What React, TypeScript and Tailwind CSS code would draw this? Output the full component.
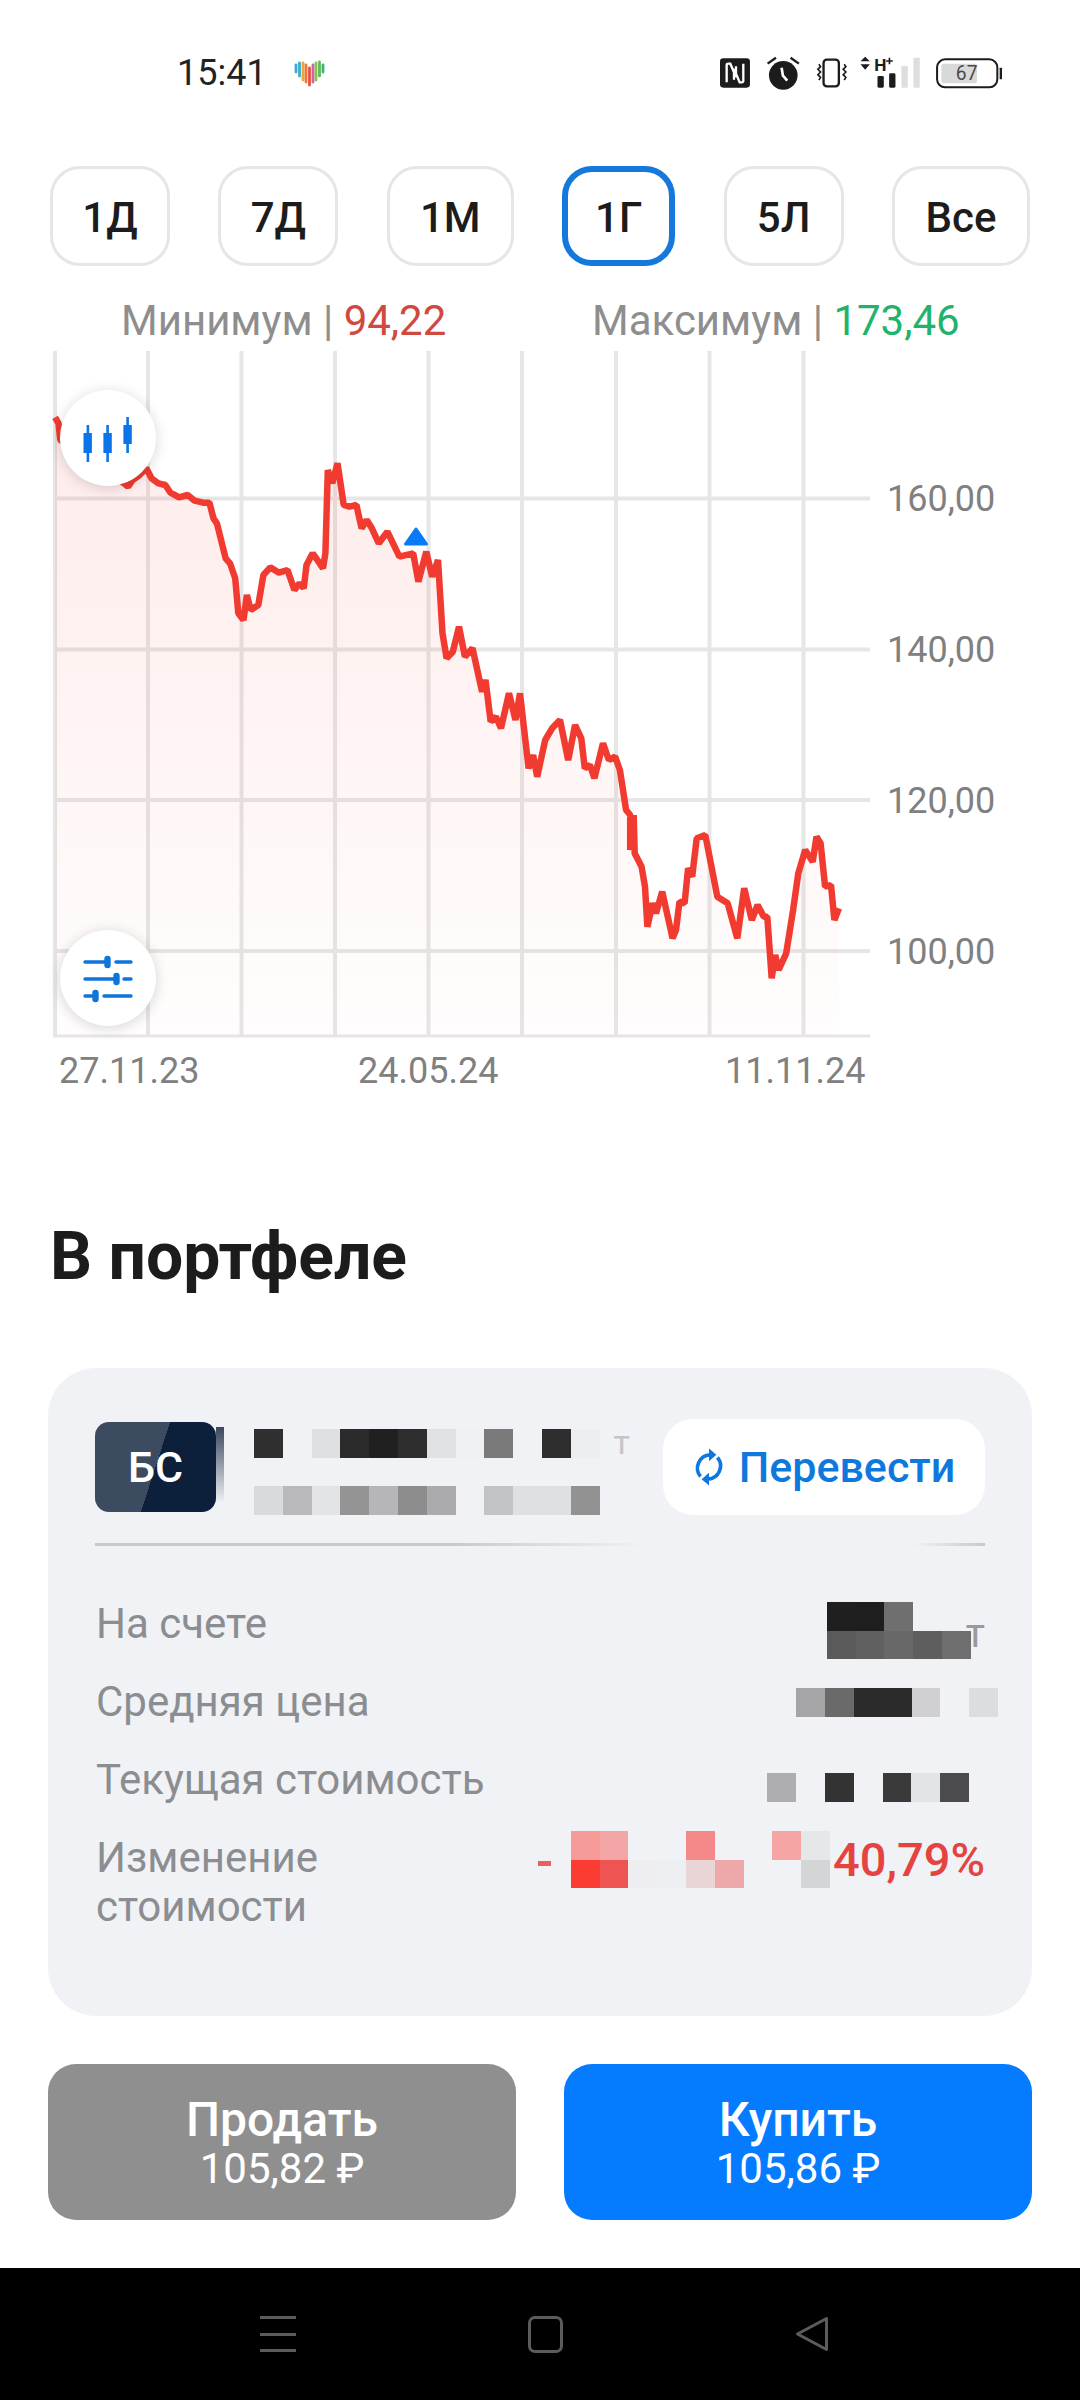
import React from "react";

const ranges = [
  { label: "1Д", width: "w-[120px]" },
  { label: "7Д", width: "w-[120px]" },
  { label: "1М", width: "w-[127px]" },
  { label: "1Г", width: "w-[113px]", active: true },
  { label: "5Л", width: "w-[120px]" },
  { label: "Все", width: "w-[138px]" },
];

// traced from the screenshot, left half then right half of the chart
const leftTrace = [
  [160, 232], [170, 250], [175, 300], [360, 430], [372, 440], [385, 420], [405, 405], [425, 385], [440, 415], [460, 430],
  [480, 435], [495, 458], [520, 472], [545, 465], [565, 482], [590, 488], [608, 488], [620, 535], [630, 550], [655, 655],
  [668, 670], [683, 715], [692, 820], [707, 840], [717, 765], [728, 810], [750, 795], [765, 705], [785, 682], [810, 698],
  [835, 690], [855, 750], [870, 730], [882, 745], [890, 675], [908, 640], [925, 665], [938, 685], [945, 640], [952, 390],
  [965, 430], [980, 370], [998, 495], [1015, 500], [1035, 495], [1050, 565], [1065, 540], [1080, 565], [1100, 610],
  [1125, 575], [1160, 650], [1200, 640], [1215, 725], [1238, 635], [1255, 710], [1272, 660], [1285, 880], [1297, 955],
  [1315, 935], [1333, 860], [1350, 950], [1372, 925], [1400, 1055], [1410, 1020], [1425, 1145], [1440, 1130], [1455, 1165],
  [1478, 1060], [1497, 1140], [1510, 1060], [1535, 1285], [1548, 1245], [1560, 1310],
];
const rightTrace = [
  [15, 0], [35, -35], [58, -60], [82, 60], [102, -45], [120, -5], [130, 85], [145, 75], [158, 115], [183, 10], [200, 60],
  [218, 50], [232, 90], [250, 210], [262, 225], [262, 330], [272, 225], [275, 340], [295, 380], [305, 440], [312, 560],
  [327, 490], [337, 520], [355, 455], [385, 595], [395, 570], [405, 485], [420, 490], [430, 385], [442, 410], [455, 295],
  [480, 285], [515, 470], [545, 490], [573, 595], [593, 445], [615, 540], [632, 495], [650, 530], [660, 530], [673, 715],
  [683, 645], [693, 690], [715, 640], [735, 510], [750, 400], [770, 330], [792, 365], [803, 290], [815, 310], [828, 440],
  [845, 435], [855, 540], [868, 505],
];
const pricePoints = [
  ...leftTrace.map(([x, y]) => [x / 2.904, 340 + y / 3]),
  ...rightTrace.map(([x, y]) => [540 + x / 2.904, 740 + y / 3]),
];
const priceLine = pricePoints.map(([x, y]) => `${x.toFixed(1)},${y.toFixed(1)}`).join(" ");
const lastX = pricePoints[pricePoints.length - 1][0].toFixed(1);

const gridX = [55, 148, 241.5, 335, 428.5, 522, 616, 709.5, 803.5];
const gridY = [498.5, 649.5, 800, 951];
const priceLabels = ["160,00", "140,00", "120,00", "100,00"];

function Mosaic({ rows }: { rows: string[][] }) {
  return (
    <div className="flex flex-col shrink-0">
      {rows.map((row, i) => (
        <div key={i} className="flex">
          {row.map((cell, j) => (
            <div key={j} className={`w-[28.8px] h-[28.5px] ${cell}`} />
          ))}
        </div>
      ))}
    </div>
  );
}

function StatusIcons() {
  return (
    <svg width="283" height="35" viewBox="60 45 850 105" className="shrink-0">
      <rect x="60" y="52" width="90" height="88" rx="10" fill="#1c1c1c" />
      <path d="M80 124V72q0-4 5-4h6l17 40V76M130 68v52q0 4-5 4h-6l-17-40v32" fill="none" stroke="#fff" strokeWidth="7" />
      <circle cx="250" cy="103" r="43" fill="#1c1c1c" />
      <path d="M203 68l25-18M272 50l25 18" stroke="#1c1c1c" strokeWidth="7" />
      <path d="M245 80l4 24 13 15" fill="none" stroke="#fff" strokeWidth="8" />
      <rect x="371" y="56" width="46" height="80" rx="10" fill="none" stroke="#1c1c1c" strokeWidth="7" />
      <path d="M357 70l5 7-8 8 8 8-8 8 8 8-5 8M433 70l5 7-8 8 8 8-8 8 8 8-5 8" fill="none" stroke="#1c1c1c" strokeWidth="5" />
      <path d="M496 47l14 14h-28zM496 86l14-16h-28z" fill="#1c1c1c" />
      <text x="523" y="90" fontFamily="Roboto, sans-serif" fontWeight="700" fontSize="52" fill="#1c1c1c">H</text>
      <path d="M569 50v20M559 60h20" stroke="#1c1c1c" strokeWidth="5" />
      <rect x="533" y="105" width="19" height="35" rx="4" fill="#1c1c1c" />
      <rect x="568" y="97" width="19" height="43" rx="4" fill="#1c1c1c" />
      <rect x="605" y="75" width="19" height="65" rx="2" fill="#dedede" />
      <rect x="641" y="50" width="19" height="90" rx="2" fill="#dedede" />
      <rect x="712" y="55" width="181" height="84" rx="24" fill="none" stroke="#1c1c1c" strokeWidth="6" />
      <rect x="725" y="68" width="107" height="59" rx="8" fill="#d9d9d9" />
      <rect x="900" y="80" width="7" height="35" rx="2" fill="#1c1c1c" />
      <text x="801" y="117" textAnchor="middle" fontFamily="Roboto, sans-serif" fontSize="58" fill="#4a4a4a">67</text>
    </svg>
  );
}

function HeartBadge() {
  const bars = [
    [3, 7, 14, "#39a7e0"],
    [6.5, 5, 18, "#35b0c8"],
    [10, 5, 22, "#f0a23c"],
    [13, 7, 24, "#ee7a3a"],
    [16.5, 10, 27, "#e8503f"],
    [20, 7, 24, "#c965a8"],
    [23, 5, 22, "#8bc34a"],
    [26.5, 4, 18, "#5cb85c"],
    [30, 7, 14, "#3bb37a"],
  ] as const;
  return (
    <svg width="33" height="30" viewBox="0 0 33 30" className="shrink-0">
      {bars.map(([x, y1, y2, color]) => (
        <line key={x} x1={x} y1={y1} x2={x} y2={y2} stroke={color} strokeWidth="2.8" strokeLinecap="round" />
      ))}
    </svg>
  );
}

function PriceChart() {
  return (
    <svg width="880" height="690" viewBox="0 351 880 690" className="shrink-0">
      <defs>
        <linearGradient id="priceFill" x1="0" y1="0" x2="0" y2="1">
          <stop offset="0" stopColor="#f23b30" stopOpacity="0.1" />
          <stop offset="1" stopColor="#f23b30" stopOpacity="0.01" />
        </linearGradient>
      </defs>
      {gridX.map((x) => (
        <line key={x} x1={x} y1="351" x2={x} y2="1037" stroke="#e6e6e6" strokeWidth="4" />
      ))}
      {gridY.map((y) => (
        <line key={y} x1="55" y1={y} x2="870" y2={y} stroke="#e6e6e6" strokeWidth="4" />
      ))}
      <line x1="53" y1="1036" x2="870" y2="1036" stroke="#e6e6e6" strokeWidth="3" />
      <polygon points={`${priceLine} ${lastX},1035 55,1035`} fill="url(#priceFill)" />
      <polyline points={priceLine} fill="none" stroke="#f23b30" strokeWidth="6.5" strokeLinejoin="bevel" />
      <path d="M405.5 544l10.5-15 10.5 15z" fill="#0a7bf5" stroke="#0a7bf5" strokeWidth="3" strokeLinejoin="round" />
    </svg>
  );
}

function RoundButton({ className, children }: { className: string; children: React.ReactNode }) {
  return (
    <div className={`absolute left-[60px] w-[96px] h-[96px] rounded-full bg-white shadow-[0_2px_14px_rgba(0,0,0,0.16)] ${className}`}>
      <svg width="96" height="96" viewBox="0 0 96 96">
        {children}
      </svg>
    </div>
  );
}

function DetailRow({ label, children }: { label: React.ReactNode; children: React.ReactNode }) {
  return (
    <div className="flex h-[78px] items-start">
      <div className="pl-[1px] text-[42px] leading-[49px] text-[#8b8d91]">{label}</div>
      <div className="ml-auto flex items-start">{children}</div>
    </div>
  );
}

export default function App() {
  return (
    <div className="flex flex-col w-[1080px] h-[2400px] bg-white font-['Roboto',sans-serif] overflow-hidden">
      <div className="flex items-center h-[146px] pl-[177px] pr-[77px]">
        <span className="text-[36px] text-[#222222]">15:41</span>
        <div className="ml-[26px]">
          <HeartBadge />
        </div>
        <div className="ml-auto">
          <StatusIcons />
        </div>
      </div>

      <div className="flex justify-between h-[100px] mt-[20px] pl-[50px] pr-[50px]">
        {ranges.map((r) => (
          <div
            key={r.label}
            className={`flex items-center justify-center ${r.width} h-full pt-[2px] rounded-[30px] bg-white text-[42px] font-medium text-[#1c1c1c] ${
              r.active ? "border-[6px] border-[#1478dc]" : "border-[3px] border-[#e6e6e6]"
            }`}
          >
            {r.label}
          </div>
        ))}
      </div>

      <div className="flex items-center h-[85px] pt-[24px] pl-[121px] text-[42px] text-[#8e8e8e]">
        <span className="w-[471px]">
          Минимум | <span className="text-[#d0493f]">94,22</span>
        </span>
        <span>
          Максимум | <span className="text-[#1fb36b]">173,46</span>
        </span>
      </div>

      <div className="relative flex h-[685px]">
        <PriceChart />
        <div className="flex flex-col pt-[72px] ml-[7px] text-[36px] text-[#808080]">
          {priceLabels.map((p) => (
            <div key={p} className="flex items-center h-[151px]">
              {p}
            </div>
          ))}
        </div>

        <RoundButton className="top-[39px]">
          <g fill="#0a74e8">
            <rect x="26.6" y="35" width="2.6" height="37" />
            <rect x="23.5" y="43" width="8.4" height="20" />
            <rect x="46.3" y="35" width="2.6" height="37" />
            <rect x="43.4" y="43" width="8.4" height="20" />
            <rect x="66.3" y="27" width="2.6" height="36" />
            <rect x="63.4" y="35" width="8.4" height="19" />
          </g>
        </RoundButton>
        <RoundButton className="top-[579px]">
          <g stroke="#0f74dc" strokeWidth="3.4" strokeLinecap="round" fill="#0f74dc">
            <path d="M25 32h20M56 32h15M25 49h29M64 49h7M25 66h8M44 66h27" />
            <rect x="46" y="27.5" width="3" height="9" rx="1.5" />
            <rect x="55" y="44.5" width="3" height="9" rx="1.5" />
            <rect x="34" y="61.5" width="3" height="9" rx="1.5" />
          </g>
        </RoundButton>
      </div>

      <div className="flex h-[40px] mt-[15px] pl-[59px] text-[36px] leading-[40px] text-[#808080]">
        <span className="w-[299px]">27.11.23</span>
        <span className="w-[367px]">24.05.24</span>
        <span>11.11.24</span>
      </div>

      <h2 className="h-[80px] mt-[126px] pl-[50px] text-[66px] leading-[80px] font-bold text-[#1c1c1c]">В портфеле</h2>

      <div className="h-[648px] mt-[71px] mx-[48px] pt-[51px] pl-[47px] pr-[47px] rounded-[48px] bg-[#f0f2f6]">
        <div className="flex items-start h-[96px]">
          <div className="flex items-center justify-center shrink-0 w-[121px] h-[90px] mt-[3px] rounded-[14px] bg-[linear-gradient(108deg,#3c4b60_50%,#0c1f3b_50%)] text-[43px] font-medium text-white">
            БС
          </div>
          <div className="shrink-0 w-[8px] h-[76px] mt-[8px] bg-[linear-gradient(180deg,#3a475c,#f0f2f6)]" />
          <div className="mt-[10px] ml-[30px]">
            <Mosaic
              rows={[["bg-[#2f2f2f]", "", "bg-[#dfe0e4]", "bg-[#2b2b2b]", "bg-[#202020]", "bg-[#2d2d2d]", "bg-[#e0e1e5]", "bg-[#eff0f3]", "bg-[#7a7a7a]", "", "bg-[#2e2e2e]", "bg-[#eceef1]"]]}
            />
            <div className="h-[28.5px]" />
            <Mosaic
              rows={[["bg-[#d9dadd]", "bg-[#b9b9bb]", "bg-[#e3e4e8]", "bg-[#949495]", "bg-[#b6b6b8]", "bg-[#8d8d8e]", "bg-[#ababad]", "", "bg-[#c2c3c5]", "bg-[#dfe0e4]", "bg-[#dfe0e4]", "bg-[#929293]"]]}
            />
          </div>
          <span className="ml-[14px] mt-[3px] text-[34px] leading-[40px] text-[#c4c5c8]">т</span>
          <div className="flex items-center justify-center gap-[14px] shrink-0 ml-auto w-[322px] h-[96px] rounded-[30px] bg-white text-[43px] font-medium text-[#0f78dc]">
            <svg width="32" height="38" viewBox="0 0 30 36" fill="none" className="shrink-0">
              <path d="M16 6.5A12.5 12.5 0 0 0 7 27M14 29.5A12.5 12.5 0 0 0 23 9" stroke="#0f78dc" strokeWidth="3.4" />
              <path d="M15 0.5l7 6-7 6zM15 23.5l-7 6 7 6z" fill="#0f78dc" />
            </svg>
            Перевести
          </div>
        </div>

        <div className="h-[3px] mt-[28px] bg-[linear-gradient(90deg,#c8c9cc_0%,#c8c9cc_40%,#f0f2f6_62%,#f0f2f6_92%,#c8c9cc_100%)]" />

        <div className="mt-[53px]">
          <DetailRow label="На счете">
            <div className="flex items-start mt-[3px]">
              <Mosaic
                rows={[
                  ["bg-[#1f1f1f]", "bg-[#1e1e1e]", "bg-[#6f6f6f]", "", ""],
                  ["bg-[#5a5a5a]", "bg-[#606060]", "bg-[#686868]", "bg-[#5e5e5e]", "bg-[#6e6e6e]"],
                ]}
              />
              <span className="ml-[-5px] mt-[12px] text-[40px] leading-[40px] text-[#9a9a9b]">т</span>
            </div>
          </DetailRow>
          <DetailRow label="Средняя цена">
            <div className="mt-[11px] mr-[-13px]">
              <Mosaic rows={[["bg-[#a5a5a8]", "bg-[#6a6a6a]", "bg-[#2b2b2b]", "bg-[#2b2b2b]", "bg-[#d0d0d2]", "", "bg-[#dcdde0]"]]} />
            </div>
          </DetailRow>
          <DetailRow label="Текущая стоимость">
            <div className="mt-[18px] mr-[16px]">
              <Mosaic rows={[["bg-[#aeaeb0]", "", "bg-[#333333]", "", "bg-[#3a3a3a]", "bg-[#e3e4e8]", "bg-[#4b4b4d]"]]} />
            </div>
          </DetailRow>
          <DetailRow
            label={
              <>
                Изменение
                <br />
                стоимости
              </>
            }
          >
            <div className="w-[13px] h-[5px] mt-[28px] mr-[20px] bg-[#e8605c]" />
            <div className="mt-[-2px]">
              <Mosaic
                rows={[
                  ["bg-[#f79b98]", "bg-[#f3a6a6]", "", "", "bg-[#f58989]", "", "", "bg-[#f6a5a5]", "bg-[#e6e7e9]"],
                  ["bg-[#fb3c33]", "bg-[#ee5552]", "bg-[#eeeef1]", "bg-[#eeeff2]", "bg-[#e9d4d6]", "bg-[#eea8aa]", "", "", "bg-[#d4d5d7]"],
                ]}
              />
            </div>
            <span className="ml-[3px] mt-[2px] text-[47px] leading-[49px] font-medium text-[#e5433f]">40,79%</span>
          </DetailRow>
        </div>
      </div>

      <div className="flex gap-[48px] h-[156px] mt-[48px] mx-[48px] text-white">
        <div className="flex flex-col items-center justify-center flex-1 pt-[2px] rounded-[28px] bg-[#8f8f8f]">
          <span className="text-[48px] leading-[52px] font-medium">Продать</span>
          <span className="text-[42px] leading-[46px]">105,82 ₽</span>
        </div>
        <div className="flex flex-col items-center justify-center flex-1 pt-[2px] rounded-[28px] bg-[#057bff]">
          <span className="text-[48px] leading-[52px] font-medium">Купить</span>
          <span className="text-[42px] leading-[46px]">105,86 ₽</span>
        </div>
      </div>

      <div className="flex items-center h-[132px] mt-[48px] bg-black pl-[260px]">
        <div className="flex flex-col justify-between w-[36px] h-[36px]">
          <div className="h-[3px] bg-[#5c5c5c]" />
          <div className="h-[3px] bg-[#5c5c5c]" />
          <div className="h-[3px] bg-[#5c5c5c]" />
        </div>
        <div className="w-[35px] h-[37px] ml-[232px] rounded-[7px] border-[3px] border-[#5c5c5c]" />
        <svg width="34" height="36" viewBox="0 0 34 36" fill="none" className="ml-[232px]">
          <path d="M31.5 2.5v31L2.5 18z" stroke="#5c5c5c" strokeWidth="3" strokeLinejoin="round" />
        </svg>
      </div>
    </div>
  );
}
